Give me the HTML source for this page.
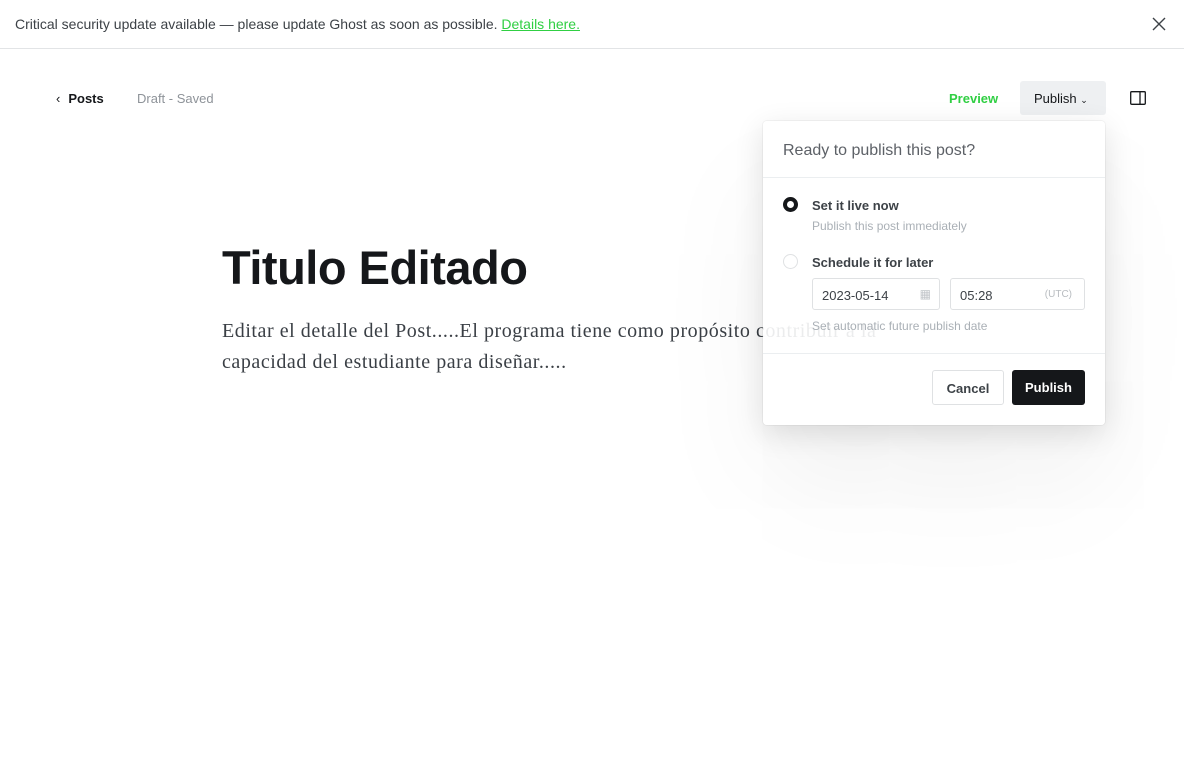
<!DOCTYPE html>
<html><head><meta charset="utf-8"><style>
*{box-sizing:border-box;margin:0;padding:0}
body{width:1184px;height:767px;overflow:hidden;background:#fff;font-family:"Liberation Sans",sans-serif;position:relative;color:#15171a}
.banner{height:49px;border-bottom:1px solid #e2e4e6;font-size:14px;color:#3d4247;padding:16px 0 0 15px}
.banner a{color:#30cf43;text-decoration:underline}
.x{position:absolute;left:1152px;top:17px}
.nav{position:absolute;top:91px;font-size:13px}
h1{position:absolute;left:222px;top:240px;font-size:47px;font-weight:bold;color:#15171a;letter-spacing:-0.5px}
.body{position:absolute;left:222px;top:316px;width:700px;font-family:"Liberation Serif",serif;font-size:20px;letter-spacing:0.55px;line-height:31px;color:#3a3f45}
.pop{position:absolute;left:763px;top:121px;width:342px;height:304px;background:rgba(255,255,255,0.9);border-radius:4px;box-shadow:0 0 0 1px rgba(0,0,0,0.04),0 8px 30px rgba(0,0,0,0.12),0 60px 120px rgba(0,0,0,0.06)}
.pop .hd{height:57px;border-bottom:1px solid #ebeef0;padding:21px 0 0 20px;font-size:16px;color:#5d6167}
.rad{position:absolute;left:20px;width:15px;height:15px;border-radius:50%}
.lbl{position:absolute;left:49px;font-size:13px;font-weight:bold;color:#3d4247}
.sub{position:absolute;left:49px;font-size:12px;color:#aab0b6}
.inp{position:absolute;top:157px;height:32px;border:1px solid #dfe1e3;border-radius:3px;font-size:13px;color:#3d4247;padding:9px 0 0 9px}
.ft{position:absolute;left:0;right:0;top:232px;border-top:1px solid #ebeef0}
.btn{position:absolute;top:249px;height:35px;border-radius:3px;font-size:13px;font-weight:bold;text-align:center;padding-top:10px}
</style></head><body>
<div class="banner">Critical security update available — please update Ghost as soon as possible. <a>Details here.</a></div>
<svg class="x" width="14" height="14" viewBox="0 0 14 14"><path d="M1 1L13 13M13 1L1 13" stroke="#3d4247" stroke-width="1.4"/></svg>
<div class="nav" style="left:56px;font-weight:bold;color:#15171a"><span style="font-weight:normal;margin-right:8px">‹</span>Posts</div>
<div class="nav" style="left:137px;color:#8e9399">Draft - Saved</div>
<div class="nav" style="left:949px;color:#30cf43;font-weight:bold">Preview</div>
<div style="position:absolute;left:1020px;top:81px;width:86px;height:34px;background:#eef0f2;border-radius:3px;font-size:13px;padding:10px 0 0 14px;color:#15171a">Publish <span style="font-size:9px">&#8964;</span></div>
<svg style="position:absolute;left:1130px;top:91px" width="16" height="14" viewBox="0 0 16 14"><rect x="0.7" y="0.7" width="14.6" height="12.6" rx="1" fill="none" stroke="#15171a" stroke-width="1.3"/><path d="M10 1V13" stroke="#15171a" stroke-width="1.3"/></svg>
<h1>Titulo Editado</h1>
<div class="body">Editar el detalle del Post.....El programa tiene como propósito contribuir a la capacidad del estudiante para diseñar.....</div>
<div class="pop">
<div class="hd">Ready to publish this post?</div>
<div class="rad" style="top:76px;border:4px solid #15171a"></div>
<div class="lbl" style="top:77px">Set it live now</div>
<div class="sub" style="top:98px">Publish this post immediately</div>
<div class="rad" style="top:133px;border:1px solid #dfe1e3"></div>
<div class="lbl" style="top:134px">Schedule it for later</div>
<div class="inp" style="left:49px;width:128px">2023-05-14<span style="position:absolute;right:8px;top:8px;color:#c0c4c8;font-size:12px">▦</span></div>
<div class="inp" style="left:187px;width:135px">05:28<span style="position:absolute;right:12px;top:10px;color:#b8bcc0;font-size:10px">(UTC)</span></div>
<div class="sub" style="top:198px">Set automatic future publish date</div>
<div class="ft"></div>
<div class="btn" style="left:169px;width:72px;border:1px solid #dfe1e3;color:#3d4247;background:#fff">Cancel</div>
<div class="btn" style="left:249px;width:73px;background:#15171a;color:#fff">Publish</div>
</div>
</body></html>
